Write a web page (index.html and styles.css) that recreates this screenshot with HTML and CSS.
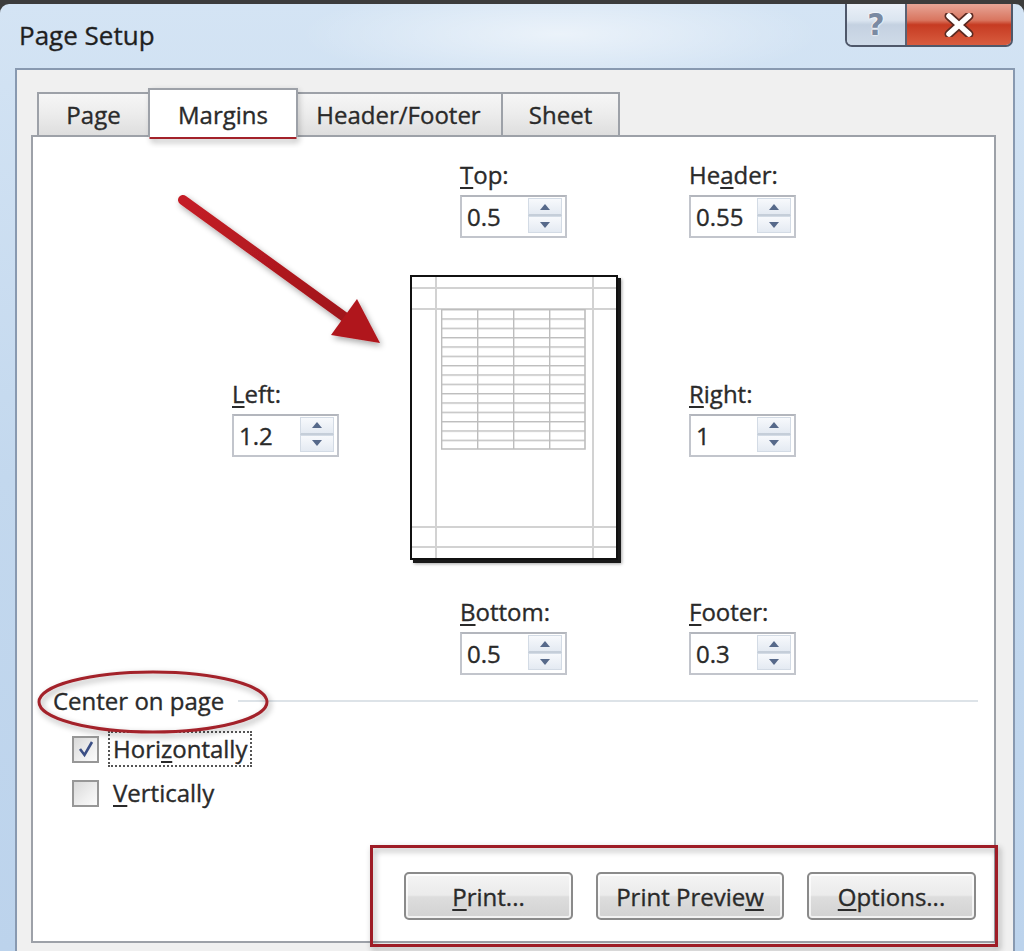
FILE: index.html
```html
<!DOCTYPE html>
<html>
<head>
    <meta charset="utf-8">
    <title>Page Setup</title>
    <link rel="stylesheet" href="styles.css">
</head>
<body>

<div class="window">
    <div class="titlebar">
        <div class="title">Page Setup</div>
        <div class="caption">
            <div class="cap-btn cap-help">?</div>
            <div class="cap-btn cap-close">
                <svg width="30" height="24" viewBox="0 0 30 24">
                    <path d="M5 3 L25 21 M25 3 L5 21" stroke="#5a2a22" stroke-width="9" stroke-linecap="round"/>
                    <path d="M5 3 L25 21 M25 3 L5 21" stroke="#ffffff" stroke-width="5.5" stroke-linecap="round"/>
                </svg>
            </div>
        </div>
    </div>

    <div class="client">
        <!--tabs-->
        <div class="tabs">
            <div class="tab t-page">Page</div>
            <div class="tab t-margins selected">Margins</div>
            <div class="tab t-header">Header/Footer</div>
            <div class="tab t-sheet">Sheet</div>
        </div>

        <div class="panel">
            <!--margin fields round the page picture-->
            <div class="margins-grid">
                <div class="spin-field f-top">
                    <div class="spin-label"><u>T</u>op:</div>
                    <div class="spin-box"><span class="spin-value">0.5</span><span class="spin-buttons"><span class="spin-up"></span><span class="spin-down"></span></span></div>
                </div>
                <div class="spin-field f-header">
                    <div class="spin-label">He<u>a</u>der:</div>
                    <div class="spin-box"><span class="spin-value">0.55</span><span class="spin-buttons"><span class="spin-up"></span><span class="spin-down"></span></span></div>
                </div>

                <div class="spin-field f-left">
                    <div class="spin-label"><u>L</u>eft:</div>
                    <div class="spin-box"><span class="spin-value">1.2</span><span class="spin-buttons"><span class="spin-up"></span><span class="spin-down"></span></span></div>
                </div>
                <div class="page-preview">
                    <svg width="204" height="281" viewBox="0 0 204 281">
                        <defs>
                            <pattern id="cells" patternUnits="userSpaceOnUse" x="29" y="32" width="36" height="9.333">
                                <path d="M0 0.6 H36 M0.6 0 V9.333" stroke="#bdbdbd" stroke-width="1.6" fill="none"/>
                            </pattern>
                        </defs>
                        <path d="M24 0 V281 M181 0 V281 M0 11 H204 M0 32 H204 M0 250 H204 M0 270 H204" stroke="#d2d2d2" stroke-width="2"/>
                        <rect x="29" y="32" width="144" height="140" fill="url(#cells)"/>
                        <path d="M173 32 V172 H29" stroke="#bdbdbd" stroke-width="1.6" fill="none"/>
                    </svg>
                </div>
                <div class="spin-field f-right">
                    <div class="spin-label"><u>R</u>ight:</div>
                    <div class="spin-box"><span class="spin-value">1</span><span class="spin-buttons"><span class="spin-up"></span><span class="spin-down"></span></span></div>
                </div>

                <div class="spin-field f-bottom">
                    <div class="spin-label"><u>B</u>ottom:</div>
                    <div class="spin-box"><span class="spin-value">0.5</span><span class="spin-buttons"><span class="spin-up"></span><span class="spin-down"></span></span></div>
                </div>
                <div class="spin-field f-footer">
                    <div class="spin-label"><u>F</u>ooter:</div>
                    <div class="spin-box"><span class="spin-value">0.3</span><span class="spin-buttons"><span class="spin-up"></span><span class="spin-down"></span></span></div>
                </div>
            </div>

            <!--center on page-->
            <div class="group-title">
                <span>Center on page</span>
                <div class="rule"></div>
            </div>
            <div class="check-row">
                <span class="checkbox checked">
                    <svg width="20" height="20" viewBox="0 0 20 20"><path d="M4 10 L8.5 16 L16 3" stroke="#3b4f85" stroke-width="2.6" fill="none"/></svg>
                </span>
                <span class="check-label focus">Hori<u>z</u>ontally</span>
            </div>
            <div class="check-row">
                <span class="checkbox"></span>
                <span class="check-label"><u>V</u>ertically</span>
            </div>

            <div class="buttons">
                <button class="btn b-print"><u>P</u>rint...</button>
                <button class="btn b-preview">Print Previe<u>w</u></button>
                <button class="btn b-options"><u>O</u>ptions...</button>
            </div>
        </div>
    </div>
</div>

<!--red marks drawn over the dialog-->
<svg class="annotations" width="1024" height="951" viewBox="0 0 1024 951">
    <defs>
        <filter id="soft" x="-20%" y="-20%" width="140%" height="140%">
            <feGaussianBlur in="SourceAlpha" stdDeviation="3"/>
            <feOffset dx="2" dy="3" result="blur"/>
            <feComponentTransfer><feFuncA type="linear" slope="0.35"/></feComponentTransfer>
            <feMerge><feMergeNode/><feMergeNode in="SourceGraphic"/></feMerge>
        </filter>
        <linearGradient id="arrowFill" x1="0" y1="0" x2="1" y2="1">
            <stop offset="0" stop-color="#c41f26"/>
            <stop offset="1" stop-color="#a0131a"/>
        </linearGradient>
    </defs>
    <rect x="151" y="89.5" width="144" height="48" fill="none" stroke="#a3222b" stroke-width="3" filter="url(#soft)"/>
    <ellipse cx="153" cy="702" rx="114" ry="30" fill="none" stroke="#a3222b" stroke-width="3" filter="url(#soft)"/>
    <rect x="371.5" y="846.5" width="625" height="99" fill="none" stroke="#9e1c25" stroke-width="3" filter="url(#soft)"/>
    <g filter="url(#soft)">
        <path d="M183 200 L346 318" stroke="url(#arrowFill)" stroke-width="10" stroke-linecap="round"/>
        <path d="M380 343 L357 299 L331 335 Z" fill="#b0161e"/>
    </g>
</svg>

</body>
</html>
```

FILE: styles.css
```css
body {
    margin: 0;
    background: #3c3c3c;
    font-family: "Open Sans", "Noto Sans", sans-serif;
    color: #2a2a2a;
    -webkit-text-stroke: 0.35px #2a2a2a;
}
u {
    text-decoration-thickness: 2px;
    text-underline-offset: 3px;
}

/* window frame */
.window {
    height: 947px;
    margin-top: 4px;
    padding: 0 9px 0 15px;
    border-radius: 9px 9px 0 0;
    background:
        radial-gradient(ellipse 260px 50px at 560px 30px, rgba(255,255,255,0.55), rgba(255,255,255,0)),
        linear-gradient(180deg, #d4e4f4 0%, #c3d8ee 50%, #bcd3ec 100%);
    display: flex;
    flex-direction: column;
    overflow: hidden;
    box-sizing: border-box;
}
.titlebar {
    height: 64px;
    display: flex;
    justify-content: space-between;
    align-items: flex-start;
    flex-shrink: 0;
}
.title {
    margin: 13px 0 0 4px;
    font-size: 26px;
    line-height: 36px;
    color: #1e1e1e;
}
.caption {
    display: flex;
    margin: -4px 2px 0 0;
    height: 45px;
    border: 2px solid #4f586a;
    border-top: none;
    border-radius: 0 0 7px 7px;
    overflow: hidden;
}
.cap-btn {
    display: flex;
    align-items: center;
    justify-content: center;
}
.cap-help {
    width: 60px;
    padding-top: 4px;
    box-sizing: border-box;
    border-right: 2px solid #5a6273;
    background: linear-gradient(180deg, #eef3f9 0%, #dbe5f0 45%, #c4d1e1 55%, #cfdbe8 100%);
    font-family: "DejaVu Sans", sans-serif;
    font-size: 30px;
    line-height: 36px;
    font-weight: bold;
    color: #7a8aa2;
    -webkit-text-stroke: 0;
    text-shadow: 0 0 2px #fff, 0 0 2px #fff, 0 0 1px #fff;
}
.cap-close {
    width: 104px;
    padding-top: 4px;
    box-sizing: border-box;
    background: linear-gradient(180deg, #eab1a4 0%, #d9755f 45%, #c63b22 55%, #d85c3f 100%);
}

/* dialog body */
.client {
    flex: 1;
    background: #f0f0f0;
    border: 2px solid #8899b0;
    border-bottom: none;
    padding: 18px 17px 8px 14px;
    display: flex;
    flex-direction: column;
}
.tabs {
    display: flex;
    align-items: flex-end;
    margin-left: 6px;
    height: 49px;
    margin-bottom: -2px;
}
.tab {
    box-sizing: border-box;
    height: 43px;
    border: 2px solid #9da1a8;
    border-bottom: none;
    background: linear-gradient(180deg, #f6f6f6 0%, #ececec 50%, #dedede 100%);
    font-size: 24px;
    line-height: 41px;
    text-align: center;
    margin-bottom: 2px;
}
.tab.selected {
    height: 49px;
    padding-top: 4px;
    background: #ffffff;
    margin: 0 -2px 0 -2px;
    position: relative;
    z-index: 1;
}
.t-page { width: 113px; }
.t-margins { width: 150px; }
.t-header { width: 207px; border-left: none; }
.t-sheet { width: 117px; border-left: none; }

.panel {
    flex: 1;
    background: #ffffff;
    border: 2px solid #9da1a8;
    display: flex;
    flex-direction: column;
}

/* margins layout */
.margins-grid {
    display: grid;
    grid-template-columns: 178px 50px 158px 71px 107px;
    grid-template-rows: auto 285px auto;
    row-gap: 37px;
    padding: 23px 0 0 199px;
}
.f-top { grid-column: 3; grid-row: 1; }
.f-header { grid-column: 5; grid-row: 1; }
.f-left { grid-column: 1; grid-row: 2; align-self: center; }
.page-preview { grid-column: 2 / 4; grid-row: 2; }
.f-right { grid-column: 5; grid-row: 2; align-self: center; }
.f-bottom { grid-column: 3; grid-row: 3; }
.f-footer { grid-column: 5; grid-row: 3; }

.spin-label {
    font-size: 24px;
    line-height: 30px;
    margin-bottom: 5px;
}
.spin-box {
    box-sizing: border-box;
    width: 107px;
    height: 43px;
    border: 2px solid #c2c5cc;
    border-top-color: #b3b6bd;
    display: flex;
    background: #ffffff;
}
.spin-value {
    flex: 1;
    padding-left: 5px;
    font-size: 24px;
    line-height: 39px;
}
.spin-buttons {
    width: 34px;
    margin: 1px 3px 3px 0;
    display: flex;
    flex-direction: column;
}
.spin-up, .spin-down {
    flex: 1;
    display: flex;
    align-items: center;
    justify-content: center;
    border: 1px solid #d3dbe5;
    background: linear-gradient(180deg, #f7f9fc, #e4eaf2);
}
.spin-up { border-bottom: 2px solid #c5ced9; }
.spin-up::after {
    content: "";
    border-left: 5px solid transparent;
    border-right: 5px solid transparent;
    border-bottom: 6px solid #56698a;
}
.spin-down::after {
    content: "";
    border-left: 5px solid transparent;
    border-right: 5px solid transparent;
    border-top: 6px solid #56698a;
}

.page-preview {
    box-sizing: border-box;
    width: 208px;
    height: 285px;
    border: 2px solid #111111;
    box-shadow: 3px 3px 0 #1a1a1a, 4px 4px 3px rgba(0,0,0,0.35);
    background: #ffffff;
}
.page-preview svg {
    display: block;
}

/* center on page */
.group-title {
    display: flex;
    align-items: center;
    margin: 11px 16px 0 20px;
    font-size: 24px;
    line-height: 30px;
}
.group-title .rule {
    flex: 1;
    height: 2px;
    margin-left: 14px;
    background: #dde3e8;
}
.check-row {
    display: flex;
    align-items: center;
    height: 34px;
    padding-left: 39px;
    margin-top: 10px;
    font-size: 24px;
}
.group-title + .check-row {
    margin-top: 16px;
}
.checkbox {
    box-sizing: border-box;
    width: 27px;
    height: 27px;
    border: 2px solid #979797;
    background: linear-gradient(135deg, #d9d9d9 0%, #efefef 60%, #fbfbfb 100%);
    display: flex;
    align-items: center;
    justify-content: center;
    margin-right: 9px;
}
.check-label {
    padding: 0 3px;
    line-height: 32px;
    border: 2px dotted transparent;
}
.check-label.focus {
    border-color: #555555;
}

/* buttons */
.buttons {
    margin-top: auto;
    display: flex;
    justify-content: flex-end;
    gap: 23px;
    padding: 0 18px 21px 0;
}
.btn {
    height: 48px;
    border: 2px solid #8a8a8a;
    border-radius: 5px;
    background: linear-gradient(180deg, #f4f4f4 0%, #ebebeb 48%, #dddddd 52%, #d2d2d2 100%);
    box-shadow: inset 0 0 0 2px rgba(255,255,255,0.7);
    font-family: "Open Sans", "Noto Sans", sans-serif;
    font-size: 24px;
    color: #2a2a2a;
    -webkit-text-stroke: 0.35px #2a2a2a;
    padding: 0;
}
.b-print { width: 169px; }
.b-preview { width: 188px; }
.b-options { width: 169px; }

.annotations {
    position: absolute;
    top: 0;
    left: 0;
    pointer-events: none;
}
```
